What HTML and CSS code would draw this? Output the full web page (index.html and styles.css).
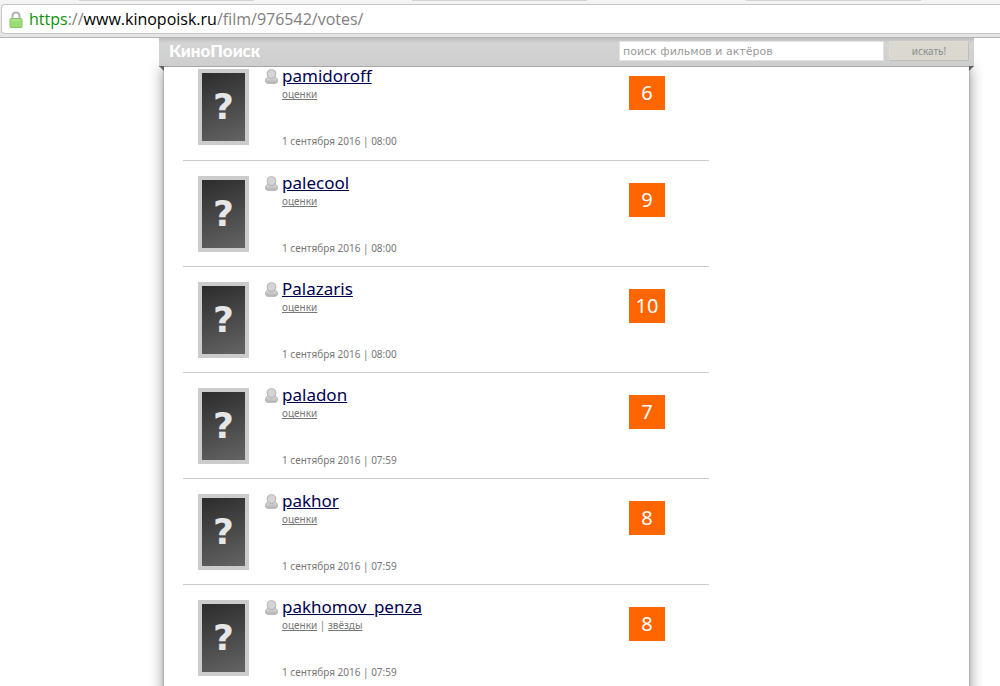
FILE: index.html
```
<!DOCTYPE html>
<html lang="ru">
<head>
  <meta charset="UTF-8">
  <title>КиноПоиск — оценки</title>
  <link rel="stylesheet" href="styles.css">
</head>
<body>
  <svg width="0" height="0" class="sprite">
    <defs>
      <linearGradient id="userFill" x1="0" y1="0" x2="0" y2="1">
        <stop offset="0" stop-color="#dcdcdc"/>
        <stop offset="1" stop-color="#b4b4b4"/>
      </linearGradient>
    </defs>
    <symbol id="user" viewBox="0 0 13 15">
      <path d="M2.6 8 C1.2 8.8 .6 10.2 .6 12 Q.6 14.3 3 14.3 H10 Q12.4 14.3 12.4 12 C12.4 10.2 11.8 8.8 10.4 8Z" fill="url(#userFill)" stroke="#b0b0b0"/>
      <path d="M6.5 .7 C3.6 .7 2.2 2.3 2.2 4.8 C2.2 7.6 4 9.6 6.5 9.6 S10.8 7.6 10.8 4.8 C10.8 2.3 9.4 .7 6.5 .7Z" fill="#d4d4d4" stroke="#b0b0b0"/>
    </symbol>
  </svg>

  <div class="browser">
    <div class="tabs"><span></span><span></span><span></span></div>
    <div class="address">
      <svg class="lock" width="14" height="17" viewBox="0 0 14 17">
        <path d="M3.5 9 V5 Q3.5 1.5 7 1.5 T10.5 5 V9" fill="none" stroke="#b3b3b3" stroke-width="2"/>
        <rect x="1" y="7.5" width="12" height="9" rx="1" fill="#9bdc76" stroke="#84c663"/>
        <path d="M2 9 H12" stroke="#b6ec94"/>
      </svg>
      <div class="url" role="textbox" aria-label="Адрес" contenteditable="true" spellcheck="false"><span class="scheme">https</span>://<span class="host">www.kinopoisk.ru</span>/film/976542/votes/</div>
    </div>
  </div>

  <div class="site">
    <header class="topbar">
      <a class="logo" href="#">КиноПоиск</a>
      <form class="search">
        <input type="text" placeholder="поиск фильмов и актёров" aria-label="поиск фильмов и актёров">
        <button type="submit">искать!</button>
      </form>
    </header>

    <main class="page">
      <ul class="votes">
        <li class="vote">
          <div class="avatar">?</div>
          <svg class="user" width="13" height="15"><use href="#user"/></svg>
          <div class="info">
            <a class="name" href="#">pamidoroff</a>
            <div class="links"><a href="#">оценки</a></div>
            <div class="date">1 сентября 2016 | 08:00</div>
          </div>
          <div class="rating">6</div>
        </li>
        <li class="vote">
          <div class="avatar">?</div>
          <svg class="user" width="13" height="15"><use href="#user"/></svg>
          <div class="info">
            <a class="name" href="#">palecool</a>
            <div class="links"><a href="#">оценки</a></div>
            <div class="date">1 сентября 2016 | 08:00</div>
          </div>
          <div class="rating">9</div>
        </li>
        <li class="vote">
          <div class="avatar">?</div>
          <svg class="user" width="13" height="15"><use href="#user"/></svg>
          <div class="info">
            <a class="name" href="#">Palazaris</a>
            <div class="links"><a href="#">оценки</a></div>
            <div class="date">1 сентября 2016 | 08:00</div>
          </div>
          <div class="rating">10</div>
        </li>
        <li class="vote">
          <div class="avatar">?</div>
          <svg class="user" width="13" height="15"><use href="#user"/></svg>
          <div class="info">
            <a class="name" href="#">paladon</a>
            <div class="links"><a href="#">оценки</a></div>
            <div class="date">1 сентября 2016 | 07:59</div>
          </div>
          <div class="rating">7</div>
        </li>
        <li class="vote">
          <div class="avatar">?</div>
          <svg class="user" width="13" height="15"><use href="#user"/></svg>
          <div class="info">
            <a class="name" href="#">pakhor</a>
            <div class="links"><a href="#">оценки</a></div>
            <div class="date">1 сентября 2016 | 07:59</div>
          </div>
          <div class="rating">8</div>
        </li>
        <li class="vote">
          <div class="avatar">?</div>
          <svg class="user" width="13" height="15"><use href="#user"/></svg>
          <div class="info">
            <a class="name" href="#">pakhomov_penza</a>
            <div class="links"><a href="#">оценки</a> | <a href="#">звёзды</a></div>
            <div class="date">1 сентября 2016 | 07:59</div>
          </div>
          <div class="rating">8</div>
        </li>
      </ul>
    </main>
  </div>
</body>
</html>
```
FILE: styles.css
```
* {
  box-sizing: border-box;
}

html {
  scrollbar-width: none;
}

body {
  margin: 0;
  background: #fff;
  font-family: "Noto Sans", Tahoma, sans-serif;
  font-size: 10px;
  color: #777;
}

.sprite {
  position: absolute;
}

/* browser toolbar */
.browser {
  position: relative;
  z-index: 3;
  background: linear-gradient(#f4f4f4, #e4e4e4);
  border-bottom: 1px solid #b4b4b4;
  padding-bottom: 3px;
}

.tabs {
  display: flex;
  justify-content: space-around;
  height: 4px;
}

.tabs span {
  width: 175px;
  height: 1px;
  background: #d4d4d4;
}

.address {
  display: flex;
  align-items: center;
  gap: 6px;
  height: 30px;
  margin-left: 1px;
  padding-left: 7px;
  background: #fff;
  border: 1px solid #c6c6c6;
  border-right: 0;
  border-radius: 4px 0 0 4px;
}

.url {
  flex: 1;
  font-family: "Open Sans", "Segoe UI", sans-serif;
  font-size: 16px;
  line-height: 24px;
  color: #808080;
  outline: none;
}

.scheme {
  color: #0a930a;
}

.host {
  color: #000;
}

/* site */
.site {
  margin: 0 26px 0 159px;
}

.topbar {
  position: relative;
  z-index: 2;
  display: flex;
  align-items: center;
  justify-content: space-between;
  height: 29px;
  padding: 0 5px 2px 10px;
  background: linear-gradient(#bdbdbd, #d4d4d4 5px, #cecece);
  border-bottom: 1px solid #a6a6a6;
}

.topbar::before,
.topbar::after {
  content: "";
  position: absolute;
  top: 100%;
  width: 5px;
  height: 5px;
  background: #606060;
}

.topbar::before {
  left: 0;
  clip-path: polygon(0 0, 100% 0, 100% 100%);
}

.topbar::after {
  right: 0;
  clip-path: polygon(0 0, 100% 0, 0 100%);
}

.logo {
  font-family: Lato, sans-serif;
  font-size: 17px;
  font-weight: 900;
  line-height: 20px;
  color: #fff;
  text-decoration: none;
}

.search {
  display: flex;
  gap: 5px;
}

.search input {
  width: 265px;
  height: 20px;
  padding: 0 3px;
  border: 1px solid #e2e2e2;
  background: #fff;
  font: 11px "DejaVu Sans", Verdana, sans-serif;
}

.search input::placeholder {
  color: #999;
  opacity: 1;
}

.search button {
  width: 80px;
  height: 20px;
  padding: 0;
  border: 1px solid;
  border-color: #dedcd6 #c0beb8 #c0beb8 #dedcd6;
  background: #dbd8cf;
  font: 10px "Noto Sans", Tahoma, sans-serif;
  color: #8c8c8c;
}

.page {
  margin: 0 5px;
  padding: 0 19px;
  min-height: 100vh;
  background: #fff;
  box-shadow: 0 0 2px #888, 0 0 14px #888;
}

.votes {
  list-style: none;
  width: 526px;
  max-width: 100%;
  margin: 0;
  padding: 0;
}

.vote {
  display: flex;
  align-items: flex-start;
  height: 106px;
  padding: 15px 44px 0 15px;
  border-bottom: 1px solid #ccc;
}

/* the list is scrolled a little under the bar */
.vote:first-child {
  height: 94px;
  padding-top: 2px;
}

.avatar {
  width: 51px;
  height: 76px;
  border: 4px solid #ccc;
  background: linear-gradient(160deg, #2c2c2c, #646464);
  font-family: "DejaVu Sans", Verdana, sans-serif;
  font-size: 36px;
  font-weight: bold;
  line-height: 68px;
  text-align: center;
  color: #e6e6e6;
}

.user {
  margin: 0 4px 0 16px;
}

.info {
  flex: 1;
  margin-top: -5px;
}

.name {
  display: block;
  width: fit-content;
  font-size: 17px;
  line-height: 23px;
  color: #000050;
}

.links {
  line-height: 14px;
}

.links a {
  color: #777;
}

.date {
  margin-top: 33px;
  line-height: 14px;
}

.rating {
  width: 36px;
  margin-top: 7px;
  background: #f60;
  font-size: 20px;
  line-height: 34px;
  text-align: center;
  color: #fff;
}
```
